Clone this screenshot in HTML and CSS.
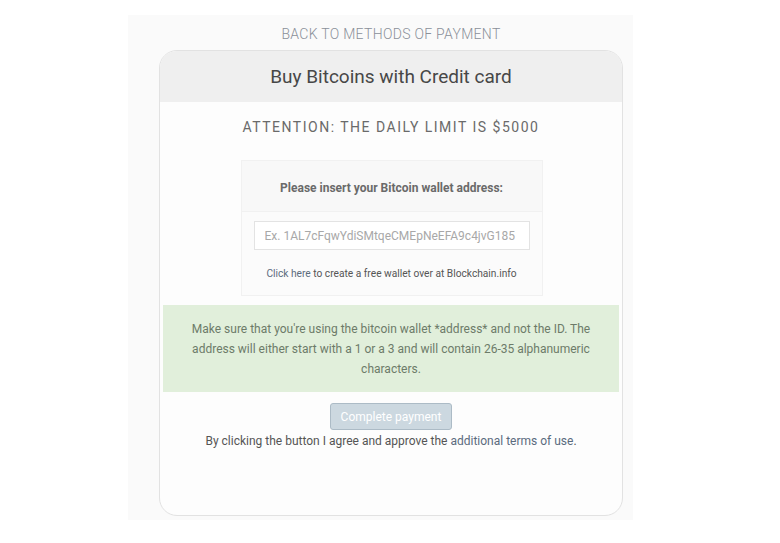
FILE: index.html
```html
<!DOCTYPE html>
<html>
<head>
<meta charset="utf-8">
<link rel="stylesheet" href="styles.css">
</head>
<body>
<div class="wrap">
  <a class="back" href="#">BACK TO METHODS OF PAYMENT</a>
  <div class="card">
    <div class="card-head">Buy Bitcoins with Credit card</div>
    <div class="attention">ATTENTION: THE DAILY LIMIT IS $5000</div>
    <div class="panel">
      <div class="panel-head">Please insert your Bitcoin wallet address:</div>
      <div class="panel-body">
        <input class="addr" type="text" placeholder="Ex. 1AL7cFqwYdiSMtqeCMEpNeEFA9c4jvG185">
        <div class="hint"><a href="#">Click here</a> to create a free wallet over at Blockchain.info</div>
      </div>
    </div>
    <div class="alert">Make sure that you're using the bitcoin wallet *address* and not the ID. The address will either start with a 1 or a 3 and will contain 26-35 alphanumeric characters.</div>
    <div class="actions">
      <button class="pay" disabled>Complete payment</button>
      <div class="terms">By clicking the button I agree and approve the <a href="#">additional terms of use</a>.</div>
    </div>
  </div>
</div>
</body>
</html>
```
FILE: styles.css
```css
html, body {
  margin: 0;
  padding: 0;
  background: #ffffff;
  font-family: Roboto, "Liberation Sans", sans-serif;
}
.wrap {
  box-sizing: border-box;
  width: 505px;
  margin: 15px 0 0 128px;
  padding: 9px 10px 4px 31px;
  background: #fafafa;
  display: flex;
  flex-direction: column;
  align-items: center;
}
.back {
  font-size: 14px;
  line-height: 20px;
  color: #8a9099;
  text-decoration: none;
  font-weight: 300;
  letter-spacing: 0.3px;
  margin-bottom: 6px;
}
.card {
  box-sizing: border-box;
  width: 464px;
  height: 466px;
  border: 1px solid #e2e2e2;
  border-radius: 18px;
  background: #fdfdfd;
  overflow: hidden;
  display: flex;
  flex-direction: column;
  align-items: center;
}
.card-head {
  align-self: stretch;
  height: 51px;
  line-height: 51px;
  background: #efefef;
  text-align: center;
  font-size: 19px;
  color: #474747;
}
.attention {
  margin-top: 16px;
  font-size: 14px;
  line-height: 18px;
  letter-spacing: 1.5px;
  color: #6a6a6a;
}
.panel {
  margin: 24px 0 0 1px;
  width: 300px;
  border: 1px solid #f1f1f1;
  background: #fbfbfb;
}
.panel-head {
  height: 50px;
  line-height: 55px;
  text-align: center;
  font-size: 12px;
  font-weight: bold;
  color: #6a6a6a;
  background: #f8f8f8;
  border-bottom: 1px solid #f1f1f1;
}
.panel-body {
  padding: 9px 12px 0;
  height: 74px;
  display: flex;
  flex-direction: column;
  align-items: center;
}
.addr {
  box-sizing: border-box;
  width: 276px;
  height: 29px;
  border: 1px solid #e3e3e3;
  background: #fff;
  padding: 0 10px;
  font-family: Roboto, "Liberation Sans", sans-serif;
  font-size: 12px;
  color: #555;
}
.addr::placeholder {
  color: #a8a8a8;
}
.hint {
  margin-top: 16px;
  font-size: 10.2px;
  line-height: 15px;
  color: #555;
}
.hint a {
  color: #5b6b7d;
  text-decoration: none;
}
.alert {
  align-self: stretch;
  margin: 9px 3px 0;
  padding: 14px 26px 13px;
  background: #e1efdb;
  color: #6d7b69;
  font-size: 12px;
  line-height: 20px;
  text-align: center;
}
.actions {
  margin-top: 11px;
  display: flex;
  flex-direction: column;
  align-items: center;
}
.pay {
  width: 122px;
  height: 27px;
  border: 1px solid #acbbc6;
  border-radius: 3px;
  background: #ccd8e0;
  color: #ffffff;
  font-family: Roboto, "Liberation Sans", sans-serif;
  font-size: 12px;
  padding: 0;
}
.terms {
  margin-top: 3px;
  font-size: 12px;
  line-height: 17px;
  color: #555;
}
.terms a {
  color: #5b6b7d;
  text-decoration: none;
}
```
